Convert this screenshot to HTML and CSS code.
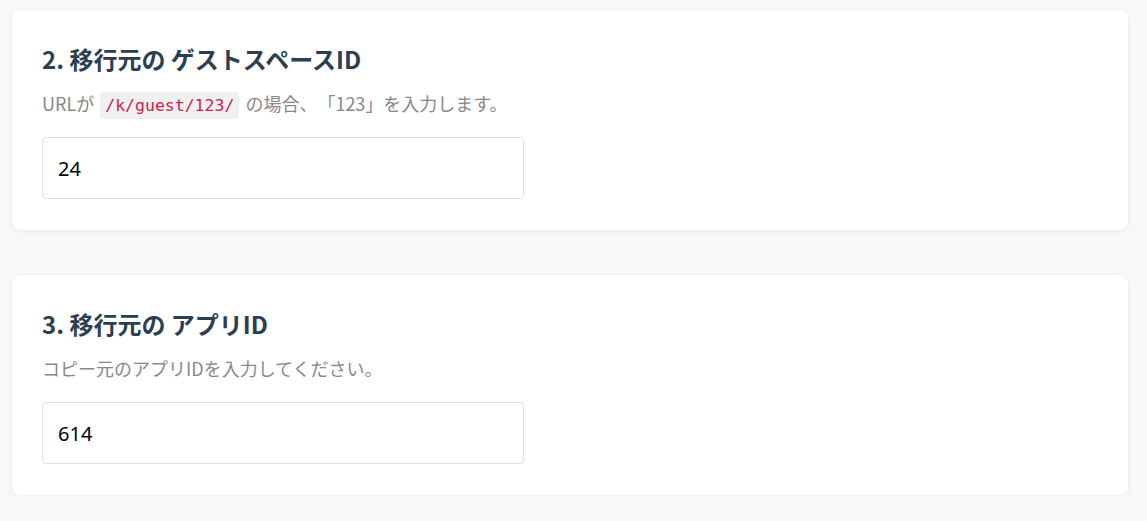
FILE: index.html
```html
<!DOCTYPE html>
<html lang="ja">
<head>
<meta charset="utf-8">
<link rel="stylesheet" href="styles.css">
</head>
<body>
<main class="page">
  <section class="card">
    <h2 class="card-title">2. 移行元の ゲストスペースID</h2>
    <p class="card-desc">URLが <code class="code">/k/guest/123/</code> の場合、「123」を入力します。</p>
    <input class="field" type="text" value="24">
  </section>
  <section class="card">
    <h2 class="card-title">3. 移行元の アプリID</h2>
    <p class="card-desc">コピー元のアプリIDを入力してください。</p>
    <input class="field" type="text" value="614">
  </section>
</main>
</body>
</html>
```

FILE: styles.css
```css
html, body {
  margin: 0;
  padding: 0;
  background: #f8f8f8;
}
body {
  font-family: "Noto Sans CJK JP", "Noto Sans", sans-serif;
  text-spacing-trim: space-all;
}
.page {
  display: flex;
  flex-direction: column;
  gap: 45px;
  padding: 10px 19px 0 12px;
}
.card {
  background: #fff;
  border-radius: 8px;
  box-shadow: 0 1px 4px rgba(0, 0, 0, 0.08);
  padding: 30px 30px 31px;
  display: flex;
  flex-direction: column;
  align-items: flex-start;
}
.card-title {
  margin: 0;
  font-size: 24px;
  line-height: 38px;
  font-weight: 700;
  color: #2c3e50;
}
.card-desc {
  margin: 12px 0 0;
  font-size: 18px;
  line-height: 27px;
  color: #888;
}
.code {
  font-family: "DejaVu Sans Mono", monospace;
  font-size: 16.5px;
  line-height: 1;
  color: #c7254e;
  background: #f0f0f0;
  border-radius: 4px;
  padding: 4px 5px;
  margin: 0 2px;
}
.field {
  margin-top: 20px;
  box-sizing: border-box;
  width: 482px;
  height: 62px;
  border: 1px solid #e0e0e0;
  border-radius: 4px;
  padding: 0 15px;
  font-family: "Noto Sans", sans-serif;
  font-size: 20px;
  color: #000;
  background: #fff;
  outline: none;
}
```
